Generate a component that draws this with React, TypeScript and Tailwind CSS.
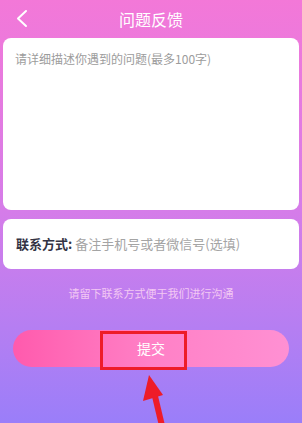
export default function App() {
  return (
    <main
      className="relative h-[423px] w-[302px] overflow-hidden bg-gradient-to-b from-[#f378d8] via-[#d57ce9] to-[#9a7ef9]"
      style={{ fontFamily: '"Noto Sans CJK SC", "Noto Sans", sans-serif' }}
    >
      <header className="relative flex h-[38px] items-center justify-center">
        <svg className="absolute left-[14px] top-[8px]" width="16" height="22" viewBox="0 0 16 22">
          <polyline points="12,3 4,10.5 12,18" fill="none" stroke="white" strokeWidth="2" strokeLinecap="round" strokeLinejoin="round" />
        </svg>
        <h1 className="text-[16px] leading-none text-white">问题反馈</h1>
      </header>

      <section className="mx-[3px] h-[172px] rounded-[8px] bg-white px-[12px] pt-[12px]">
        <p className="text-[12px] leading-[18px] text-[#9c9c9c]">请详细描述你遇到的问题(最多100字)</p>
      </section>

      <section className="mx-[3px] mt-[9px] flex h-[50px] items-center rounded-[8px] bg-white px-[13px] text-[13px]">
        <span className="font-bold text-[#333344]">联系方式:</span>
        <span className="ml-[3px] text-[#a4a4a4]">备注手机号或者微信号(选填)</span>
      </section>

      <p className="mt-[16px] text-center text-[11px] text-[#f3c8f3]">请留下联系方式便于我们进行沟通</p>

      <div className="mx-[13px] mt-[28px] flex h-[37px] items-center justify-center rounded-full bg-gradient-to-r from-[#ff5aad] via-[#ff80c6] to-[#ff90d3]">
        <span className="text-[14px] text-white">提交</span>
      </div>

      <div className="absolute left-[100px] top-[331px] h-[39px] w-[87px] border-[3px] border-[#ee1c28]" />

      <svg className="absolute left-0 top-0" width="302" height="423" viewBox="0 0 302 423">
        <line x1="163" y1="430" x2="154" y2="392" stroke="#ee1c28" strokeWidth="6" />
        <polygon points="149,375 143,401 163,395" fill="#ee1c28" />
      </svg>
    </main>
  );
}
